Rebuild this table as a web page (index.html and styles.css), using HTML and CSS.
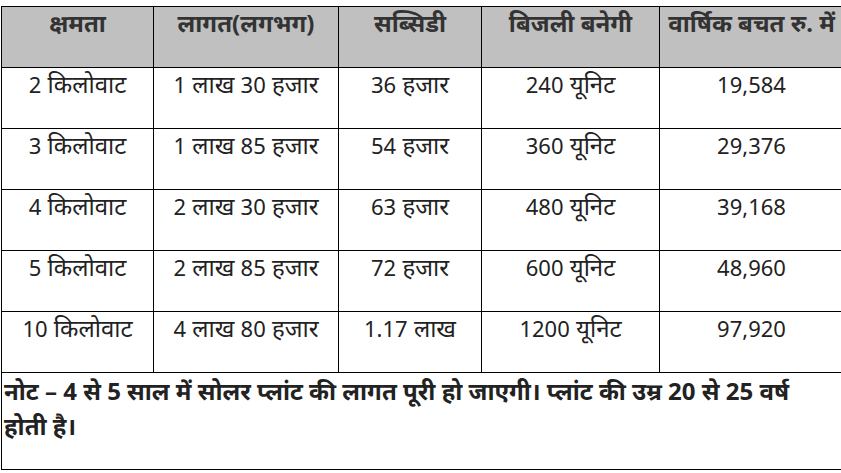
FILE: index.html
```html
<!DOCTYPE html>
<html lang="hi">
<head>
<meta charset="utf-8">
<title>सोलर प्लांट</title>
<link rel="stylesheet" href="styles.css">
</head>
<body>
<table class="solar">
  <colgroup>
    <col class="c1"><col class="c2"><col class="c3"><col class="c4"><col class="c5">
  </colgroup>
  <thead>
    <tr class="head">
      <th>क्षमता</th>
      <th>लागत(लगभग)</th>
      <th>सब्सिडी</th>
      <th>बिजली बनेगी</th>
      <th>वार्षिक बचत रु. में</th>
    </tr>
  </thead>
  <tbody>
    <tr><td><span class="n">2</span> किलोवाट</td><td><span class="n">1</span> लाख <span class="n">30</span> हजार</td><td><span class="n">36</span> हजार</td><td><span class="n">240</span> यूनिट</td><td><span class="n">19,584</span></td></tr>
    <tr><td><span class="n">3</span> किलोवाट</td><td><span class="n">1</span> लाख <span class="n">85</span> हजार</td><td><span class="n">54</span> हजार</td><td><span class="n">360</span> यूनिट</td><td><span class="n">29,376</span></td></tr>
    <tr><td><span class="n">4</span> किलोवाट</td><td><span class="n">2</span> लाख <span class="n">30</span> हजार</td><td><span class="n">63</span> हजार</td><td><span class="n">480</span> यूनिट</td><td><span class="n">39,168</span></td></tr>
    <tr><td><span class="n">5</span> किलोवाट</td><td><span class="n">2</span> लाख <span class="n">85</span> हजार</td><td><span class="n">72</span> हजार</td><td><span class="n">600</span> यूनिट</td><td><span class="n">48,960</span></td></tr>
    <tr><td><span class="n">10</span> किलोवाट</td><td><span class="n">4</span> लाख <span class="n">80</span> हजार</td><td><span class="n">1.17</span> लाख</td><td><span class="n">1200</span> यूनिट</td><td><span class="n">97,920</span></td></tr>
    <tr class="note"><td colspan="5">नोट – 4 से 5 साल में सोलर प्लांट की लागत पूरी हो जाएगी। प्लांट की उम्र 20 से 25 वर्ष होती है।</td></tr>
  </tbody>
</table>
</body>
</html>
```

FILE: styles.css
```css
html {
  overflow: hidden;
}
body {
  margin: 0;
  padding: 6px 0 0 1px;
  background: #fff;
  font-family: "Noto Sans", "Noto Sans Devanagari", sans-serif;
  color: #222;
}
.solar {
  border-collapse: collapse;
  table-layout: fixed;
  width: 842px;
}
.c1 { width: 152px; }
.c2 { width: 185px; }
.c3 { width: 143px; }
.c4 { width: 178px; }
.c5 { width: 184px; }
.solar th,
.solar td {
  border: 1px solid #000;
  padding: 0 2px;
  vertical-align: top;
  text-align: center;
  font-size: 24px;
  line-height: 32px;
  height: 61px;
  box-sizing: border-box;
}
.solar .n {
  font-size: 22px;
}
.solar th {
  background: #c0c0c0;
  font-weight: 700;
  color: #333;
}
.solar .note td {
  text-align: left;
  font-weight: 700;
  line-height: 35px;
  height: 97px;
  padding: 0 30px 0 2px;
  color: #222;
}
```
